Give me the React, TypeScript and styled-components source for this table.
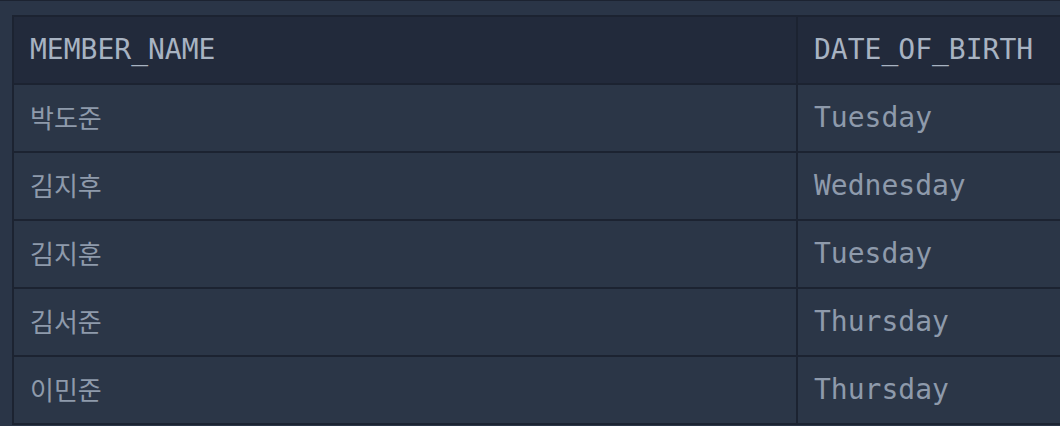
import styled, { createGlobalStyle } from 'styled-components'

const GlobalStyle = createGlobalStyle`
	html, body {
		margin: 0;
		padding: 0;
		background: #2a3547;
		overflow: hidden;
	}
`;

const Page = styled.div`
	width: 1060px;
	height: 426px;
	box-sizing: border-box;
	border-top: 1px solid #1c2331;
	padding: 14px 0 0 12px;
	background: #2a3547;
	overflow: hidden;
`;

const Table = styled.table`
	border-collapse: collapse;
	border: 2px solid #1c2331;
	width: 1100px;
	table-layout: fixed;
	font-family: 'DejaVu Sans Mono', 'Noto Sans CJK KR', monospace;
`;

const HeadCell = styled.th<{ $width?: number }>`
	width: ${(p) => (p.$width ? `${p.$width}px` : 'auto')};
	height: 68px;
	padding: 0 16px 2px;
	text-align: left;
	font-weight: 400;
	font-size: 28px;
	color: #a8b3c2;
	background: #222a3b;
	border: 2px solid #1c2331;
	white-space: nowrap;
	box-sizing: border-box;
`;

const Cell = styled.td<{ $korean?: boolean }>`
	height: 68px;
	padding: ${(p) => (p.$korean ? '0 16px 4px' : '0 16px 2px')};
	font-size: ${(p) => (p.$korean ? '26px' : '28px')};
	font-family: ${(p) =>
		p.$korean
			? "'Noto Sans CJK KR', sans-serif"
			: "'DejaVu Sans Mono', monospace"};
	color: #8e9aab;
	background: #2b3647;
	border: 2px solid #1c2331;
	white-space: nowrap;
	box-sizing: border-box;
`;

const rows = [
	{ name: '박도준', day: 'Tuesday' },
	{ name: '김지후', day: 'Wednesday' },
	{ name: '김지훈', day: 'Tuesday' },
	{ name: '김서준', day: 'Thursday' },
	{ name: '이민준', day: 'Thursday' },
];

function App() {
	return (
		<>
			<GlobalStyle />
			<Page>
				<Table>
					<thead>
						<tr>
							<HeadCell $width={784}>MEMBER_NAME</HeadCell>
							<HeadCell>DATE_OF_BIRTH</HeadCell>
						</tr>
					</thead>
					<tbody>
						{rows.map((row, i) => (
							<tr key={i}>
								<Cell $korean>{row.name}</Cell>
								<Cell>{row.day}</Cell>
							</tr>
						))}
					</tbody>
				</Table>
			</Page>
		</>
	);
}

export default App;
